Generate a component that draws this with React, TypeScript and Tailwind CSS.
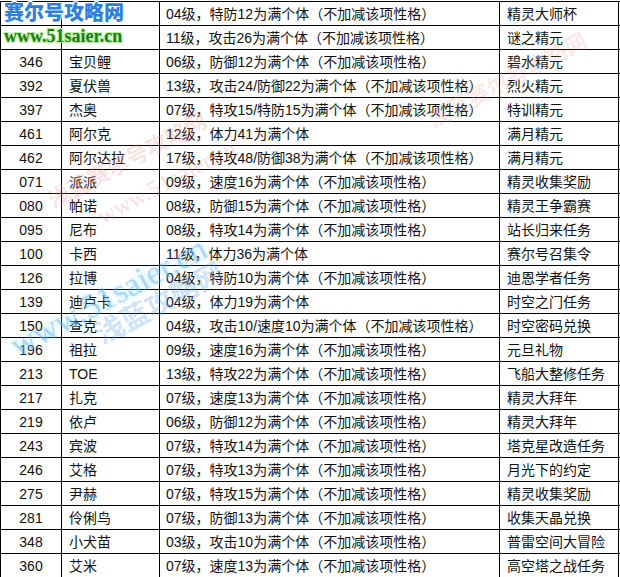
const ROWS: [string, string, string, string][] = [
  ['', '', '04级，特防12为满个体（不加减该项性格）', '精灵大师杯'],
  ['', '', '11级，攻击26为满个体（不加减该项性格）', '谜之精元'],
  ['346', '宝贝鲤', '06级，防御12为满个体（不加减该项性格）', '碧水精元'],
  ['392', '夏伏兽', '13级，攻击24/防御22为满个体（不加减该项性格）', '烈火精元'],
  ['397', '杰奥', '07级，特攻15/特防15为满个体（不加减该项性格）', '特训精元'],
  ['461', '阿尔克', '12级，体力41为满个体', '满月精元'],
  ['462', '阿尔达拉', '17级，特攻48/防御38为满个体（不加减该项性格）', '满月精元'],
  ['071', '派派', '09级，速度16为满个体（不加减该项性格）', '精灵收集奖励'],
  ['080', '帕诺', '08级，防御15为满个体（不加减该项性格）', '精灵王争霸赛'],
  ['095', '尼布', '08级，特攻14为满个体（不加减该项性格）', '站长归来任务'],
  ['100', '卡西', '11级，体力36为满个体', '赛尔号召集令'],
  ['126', '拉博', '04级，特防10为满个体（不加减该项性格）', '迪恩学者任务'],
  ['139', '迪卢卡', '04级，体力19为满个体', '时空之门任务'],
  ['150', '查克', '04级，攻击10/速度10为满个体（不加减该项性格）', '时空密码兑换'],
  ['196', '祖拉', '09级，速度16为满个体（不加减该项性格）', '元旦礼物'],
  ['213', 'TOE', '13级，特攻22为满个体（不加减该项性格）', '飞船大整修任务'],
  ['217', '扎克', '07级，速度13为满个体（不加减该项性格）', '精灵大拜年'],
  ['219', '依卢', '06级，防御12为满个体（不加减该项性格）', '精灵大拜年'],
  ['243', '宾波', '07级，特攻14为满个体（不加减该项性格）', '塔克星改造任务'],
  ['246', '艾格', '07级，特攻13为满个体（不加减该项性格）', '月光下的约定'],
  ['275', '尹赫', '07级，特攻15为满个体（不加减该项性格）', '精灵收集奖励'],
  ['281', '伶俐鸟', '07级，防御13为满个体（不加减该项性格）', '收集天晶兑换'],
  ['348', '小犬苗', '03级，攻击10为满个体（不加减该项性格）', '普雷空间大冒险'],
  ['360', '艾米', '07级，速度13为满个体（不加减该项性格）', '高空塔之战任务'],
];

const FONT = "font-['Liberation_Sans','Noto_Sans_CJK_SC',sans-serif]";

export default function App() {
  return (
    <div className={`relative h-[577px] w-[620px] overflow-hidden bg-white pt-px text-[14px] leading-none text-[#111] ${FONT}`}>
      {/* table */}
      <div className="border-l border-t border-black">
        {ROWS.map(([num, name, desc, src], i) => (
          <div key={i} className="grid h-[24px] grid-cols-[61px_98px_340px_119px] border-b border-black">
            <div className="flex items-center justify-center border-r border-black">{num}</div>
            <div className="flex items-center border-r border-black pl-[7px]">{name}</div>
            <div className="flex items-center whitespace-nowrap border-r border-black pl-[6px]">{desc}</div>
            <div className="flex items-center border-r border-black pl-[7px]">{src}</div>
          </div>
        ))}
      </div>

      {/* watermarks */}
      <div className="pointer-events-none absolute left-[40px] top-[150px] -rotate-[28deg] whitespace-nowrap text-[22px] font-bold text-[#e88a8a]/25">
        浅蓝赛尔号攻略网
      </div>
      <div className="pointer-events-none absolute left-[90px] top-[170px] -rotate-[28deg] whitespace-nowrap font-['Liberation_Serif',serif] text-[24px] text-[#e07a7a]/25">
        www.51saier.cn
      </div>
      <div className="pointer-events-none absolute left-[420px] top-[70px] -rotate-[28deg] whitespace-nowrap text-[22px] font-bold text-[#e88a8a]/20">
        浅蓝赛尔号攻略网
      </div>
      <div className="pointer-events-none absolute left-[0px] top-[280px] -rotate-[28deg] whitespace-nowrap font-['Liberation_Serif',serif] text-[34px] text-[#5aa0e8]/35 [text-shadow:0_0_4px_rgba(120,220,255,0.6)]">
        www.51saier.cn
      </div>
      <div className="pointer-events-none absolute left-[90px] top-[290px] -rotate-[28deg] whitespace-nowrap text-[28px] font-bold text-[#5aa0e8]/30">
        浅蓝攻略网
      </div>

      {/* logo */}
      <div className="pointer-events-none absolute left-[4px] top-[3px] whitespace-nowrap text-[20px] font-black leading-[20px] text-[#2f80dc] [text-shadow:1px_1px_0_#fff,-1px_-1px_0_#fff,1px_-1px_0_#fff,-1px_1px_0_#fff]">
        赛尔号攻略网
      </div>
      <div className="pointer-events-none absolute left-[4px] top-[27px] whitespace-nowrap font-['Liberation_Serif',serif] text-[18px] font-bold leading-[18px] text-[#1f7a18] [text-shadow:1px_1px_0_#b8f0a0,-1px_-1px_0_#b8f0a0,1px_-1px_0_#b8f0a0,-1px_1px_0_#b8f0a0]">
        www.51saier.cn
      </div>
    </div>
  );
}
